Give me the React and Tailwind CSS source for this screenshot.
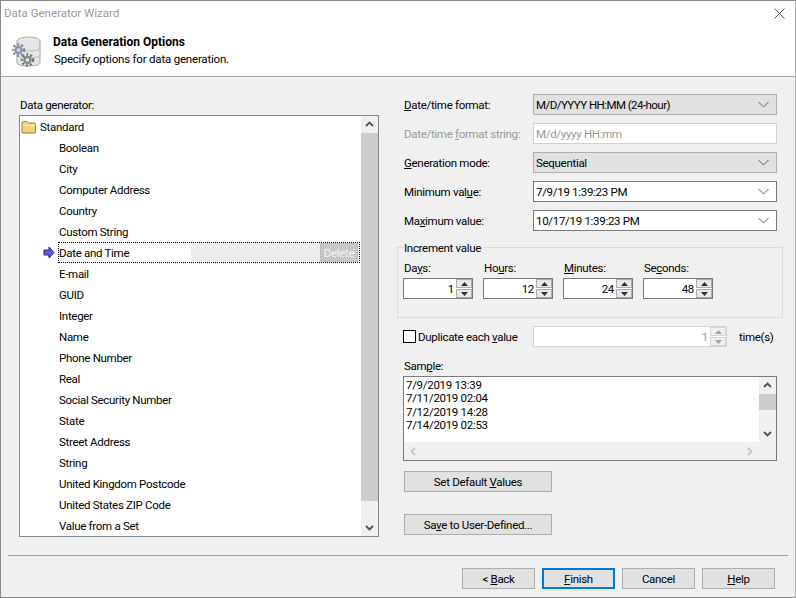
const F = "[font-family:'Roboto','Liberation_Sans',sans-serif]";

const items = ["Boolean","City","Computer Address","Country","Custom String","Date and Time","E-mail","GUID","Integer","Name","Phone Number","Real","Social Security Number","State","Street Address","String","United Kingdom Postcode","United States ZIP Code","Value from a Set"];

function Chev({ dir = "down", color = "#505050", size = 9 }) {
  const d = { down: "M1 3 L4.5 6.5 L8 3", up: "M1 6 L4.5 2.5 L8 6", left: "M6 1 L2.5 4.5 L6 8", right: "M3 1 L6.5 4.5 L3 8" }[dir];
  return <svg width={size} height={size} viewBox="0 0 9 9" className="shrink-0"><path d={d} fill="none" stroke={color} strokeWidth="1.8" /></svg>;
}

function Thin() {
  return <svg width="11" height="7" viewBox="0 0 11 7" className="shrink-0"><path d="M0.5 1 L5.5 6 L10.5 1" fill="none" stroke="#606060" strokeWidth="1" /></svg>;
}

function Select({ value, kind, textClass = "" }) {
  const cls = kind === "gray" ? "bg-[#e1e1e1] border-[#adadad]" : "bg-white border-[#7a7a7a]";
  return (
    <div className={`w-[244px] h-[21px] border ${cls} flex items-center pl-[2px] pr-[7px] justify-between text-black`}>
      <span className={textClass}>{value}</span><Thin />
    </div>
  );
}

function Row({ label, children, muted }) {
  return (
    <div className="flex items-center h-[21px]">
      <div className={`w-[129px] whitespace-nowrap ${muted ? "text-[#9a9a9a]" : "text-black"}`}>{label}</div>
      {children}
    </div>
  );
}

function Tri({ up, color = "#303030" }) {
  return <svg width="7" height="4" viewBox="0 0 7 4"><path d={up ? "M3.5 0 L7 4 L0 4 Z" : "M0 0 L7 0 L3.5 4 Z"} fill={color} /></svg>;
}

function SpinBtns({ disabled }) {
  const b = disabled ? "border-[#d4d4d4] bg-[#f0f0f0]" : "border-[#adadad] bg-[#e8e8e8]";
  const c = disabled ? "#a0a0a0" : "#303030";
  return (
    <div className="flex flex-col gap-[1px] w-[16px] h-[19px] shrink-0">
      <div className={`h-[9px] border ${b} flex items-center justify-center`}><Tri up color={c} /></div>
      <div className={`h-[9px] border ${b} flex items-center justify-center`}><Tri color={c} /></div>
    </div>
  );
}

function Spin({ label, value }) {
  return (
    <div className="w-[70px] flex flex-col">
      <div className="h-[21px] pl-[1px] flex items-center text-black"><span>{label}</span></div>
      <div className="h-[21px] border border-[#7a7a7a] bg-white flex items-center justify-end text-black">
        <span className="mr-[2px]">{value}</span><SpinBtns />
      </div>
    </div>
  );
}

function Btn({ children, className = "", primary }) {
  return (
    <div className={`h-[21px] flex items-center justify-center bg-[#e1e1e1] text-black ${primary ? "border-2 border-[#0078d7]" : "border border-[#adadad]"} ${className}`}>
      <span>{children}</span>
    </div>
  );
}

function DbIcon() {
  return (
    <svg width="32" height="34" viewBox="0 0 32 34">
      <ellipse cx="16.5" cy="7" rx="11.5" ry="4" fill="#e8e8e8" stroke="#a8a8a8" />
      <path d="M5 7 V29 C5 33 28 33 28 29 V7" fill="#e6e6e6" stroke="#a8a8a8" />
      <path d="M5 14 C5 18 28 18 28 14 M5 21 C5 25 28 25 28 21" fill="none" stroke="#bcbcbc" />
      <g stroke="#7d82a0" strokeWidth="2.4" strokeDasharray="2 2" fill="none"><circle cx="6.5" cy="16" r="5.5" /></g>
      <circle cx="6.5" cy="16" r="4.2" fill="#8f93ad" /><circle cx="6.5" cy="16" r="1.8" fill="#dcdce4" />
      <g stroke="#707070" strokeWidth="2.4" strokeDasharray="2 2" fill="none"><circle cx="15.5" cy="26" r="5.5" /></g>
      <circle cx="15.5" cy="26" r="4.2" fill="#85888f" /><circle cx="15.5" cy="26" r="1.8" fill="#e8e8e8" />
    </svg>
  );
}

function Folder() {
  return (
    <svg width="16" height="14" viewBox="0 0 16 14" className="shrink-0">
      <path d="M1 12 V3 Q1 1.5 2.5 1.5 H6 L7.5 3 H13 Q14.5 3 14.5 4.5 V12 Q14.5 13 13.5 13 H2 Q1 13 1 12 Z" fill="#f0d27a" stroke="#9a7a2c" />
      <path d="M2 5.5 H14" stroke="#fff2c0" />
    </svg>
  );
}

function RowArrow() {
  return (
    <svg width="12" height="13" viewBox="0 0 12 13" className="shrink-0">
      <path d="M1 4 H6 V1 L11 6.5 L6 12 V9 H1 Z" fill="#5a5ad8" stroke="#24248c" />
    </svg>
  );
}

export default function App() {
  return (
    <div className={`w-[796px] h-[598px] bg-[#f0f0f0] border border-[#8a8a8a] border-r-[#b0b0b0] flex flex-col overflow-hidden text-[11.5px] tracking-[-0.3px] leading-[16px] ${F}`}>
      <div className="bg-white h-[76px] border-b border-[#a0a0a0] shrink-0 flex flex-col">
        <div className="h-[24px] flex items-center justify-between pl-[3px] pr-[10px] text-[#9a9a9a] tracking-normal">
          <span>Data Generator Wizard</span>
          <svg width="11" height="11" viewBox="0 0 11 11"><path d="M0.5 0.5 L10.5 10.5 M10.5 0.5 L0.5 10.5" stroke="#555" strokeWidth="1" /></svg>
        </div>
        <div className="flex pl-[11px]">
          <div className="pt-[9px] w-[41px] shrink-0"><DbIcon /></div>
          <div className="pt-[9px]">
            <div className="font-bold text-black text-[12px] tracking-normal">Data Generation Options</div>
            <div className="text-black pl-[1px] mt-[1px] tracking-[-0.2px]">Specify options for data generation.</div>
          </div>
        </div>
      </div>

      <div className="flex flex-1 pl-[18px]">
        <div className="w-[360px] pt-[20px] shrink-0">
          <div className="h-[18px] pl-[1px] text-black">Data <u>g</u>enerator:</div>
          <div className="h-[422px] border border-[#828790] bg-white flex">
            <div className="flex-1 flex flex-col">
              <div className="h-[21px] flex items-center pl-[1px] gap-[3px] text-black"><Folder /><span>Standard</span></div>
              {items.map((t) =>
                t === "Date and Time" ? (
                  <div key={t} className="h-[21px] flex items-center text-black">
                    <div className="w-[38px] flex justify-end pr-[3px] shrink-0"><RowArrow /></div>
                    <div className="flex-1 h-[21px] border border-dotted border-black flex items-center">
                      <span className="w-[132px] shrink-0">{t}</span>
                      <div className="flex-1 h-[19px] bg-[#eeeeee] flex justify-end items-center pr-[1px]">
                        <div className="w-[38px] h-[19px] bg-[#c8c8c8] border border-[#bdbdbd] text-[#f4f4f4] flex items-center justify-center">Delete</div>
                      </div>
                    </div>
                  </div>
                ) : (
                  <div key={t} className="h-[21px] flex items-center pl-[39px] text-black">{t}</div>
                )
              )}
            </div>
            <div className="w-[17px] bg-[#f0f0f0] flex flex-col shrink-0 ml-[1px]">
              <div className="h-[17px] flex items-center justify-center"><Chev dir="up" /></div>
              <div className="h-[368px] bg-[#cdcdcd]"></div>
              <div className="flex-1 flex items-end justify-center pb-[4px]"><Chev /></div>
            </div>
          </div>
        </div>

        <div className="ml-[25px] w-[374px] pt-[17px] flex flex-col shrink-0">
          <div className="flex flex-col gap-[8px] w-[373px]">
            <Row label={<><u>D</u>ate/time format:</>}><Select kind="gray" textClass="tracking-[-0.55px]" value="M/D/YYYY HH:MM (24-hour)" /></Row>
            <Row muted label={<>Date/time <u>f</u>ormat string:</>}>
              <div className="w-[244px] h-[21px] border border-[#d0d0d0] bg-white flex items-center pl-[2px] text-[#9a9a9a]">M/d/yyyy HH:mm</div>
            </Row>
            <Row label={<><u>G</u>eneration mode:</>}><Select kind="gray" value="Sequential" /></Row>
            <Row label={<>Minimum val<u>u</u>e:</>}><Select value="7/9/19 1:39:23 PM" /></Row>
            <Row label={<>Ma<u>x</u>imum value:</>}><Select value="10/17/19 1:39:23 PM" /></Row>
          </div>

          <div className="relative mt-[16px] -ml-[7px] w-[386px] h-[71px] border border-[#dcdcdc] px-[5px] pt-[9px]">
            <span className="absolute -top-[8px] left-[6px] bg-[#f0f0f0] pr-[2px] text-black">Increment value</span>
            <div className="flex gap-[10px]">
              <Spin label={<>Da<u>y</u>s:</>} value="1" />
              <Spin label={<>Ho<u>u</u>rs:</>} value="12" />
              <Spin label={<><u>M</u>inutes:</>} value="24" />
              <Spin label={<>Se<u>c</u>onds:</>} value="48" />
            </div>
          </div>

          <div className="flex items-center h-[21px] mt-[8px] -ml-[1px] text-black">
            <div className="w-[13px] h-[13px] border border-black bg-white shrink-0"></div>
            <span className="ml-[2px] w-[115px] shrink-0 whitespace-nowrap">Duplicate each <u>v</u>alue</span>
            <div className="w-[194px] h-[21px] border border-[#d4d4d4] bg-white flex items-center justify-end shrink-0">
              <span className="text-[#9a9a9a] mr-[2px]">1</span><SpinBtns disabled />
            </div>
            <span className="ml-[12px]">time(s)</span>
          </div>

          <div className="h-[19px] mt-[9px] flex items-center text-black"><span>Sam<u>p</u>le:</span></div>
          <div className="w-[374px] h-[85px] mt-[1px] -ml-[1px] border border-[#7a7a7a] bg-[#f0f0f0] flex flex-col text-black">
            <div className="flex h-[65px] shrink-0">
              <div className="w-[355px] bg-white pl-[2px] pt-[2px] leading-[13.4px]">
                <div>7/9/2019 13:39</div>
                <div>7/11/2019 02:04</div>
                <div>7/12/2019 14:28</div>
                <div>7/14/2019 02:53</div>
              </div>
              <div className="flex-1 flex flex-col">
                <div className="h-[17px] flex items-center justify-center"><Chev dir="up" /></div>
                <div className="h-[16px] bg-[#cdcdcd]"></div>
                <div className="flex-1 flex items-end justify-center pb-[4px]"><Chev /></div>
              </div>
            </div>
            <div className="flex-1 w-[355px] flex items-center justify-between px-[5px]">
              <Chev dir="left" color="#c4c4c4" /><Chev dir="right" color="#c4c4c4" />
            </div>
          </div>

          <Btn className="w-[148px] mt-[10px]">Set Default <u>V</u>alues</Btn>
          <Btn className="w-[148px] mt-[22px]">Sa<u>v</u>e to User-Defined...</Btn>
        </div>
      </div>

      <div className="h-[42px] shrink-0 mx-[7px] border-t border-[#a0a0a0] flex justify-end items-start pt-[12px] pr-[13px] gap-[7px]">
        <Btn className="w-[73px]">&lt; <u>B</u>ack</Btn>
        <Btn className="w-[73px]" primary><u>F</u>inish</Btn>
        <Btn className="w-[73px]">Cancel</Btn>
        <Btn className="w-[73px]"><u>H</u>elp</Btn>
      </div>
    </div>
  );
}
